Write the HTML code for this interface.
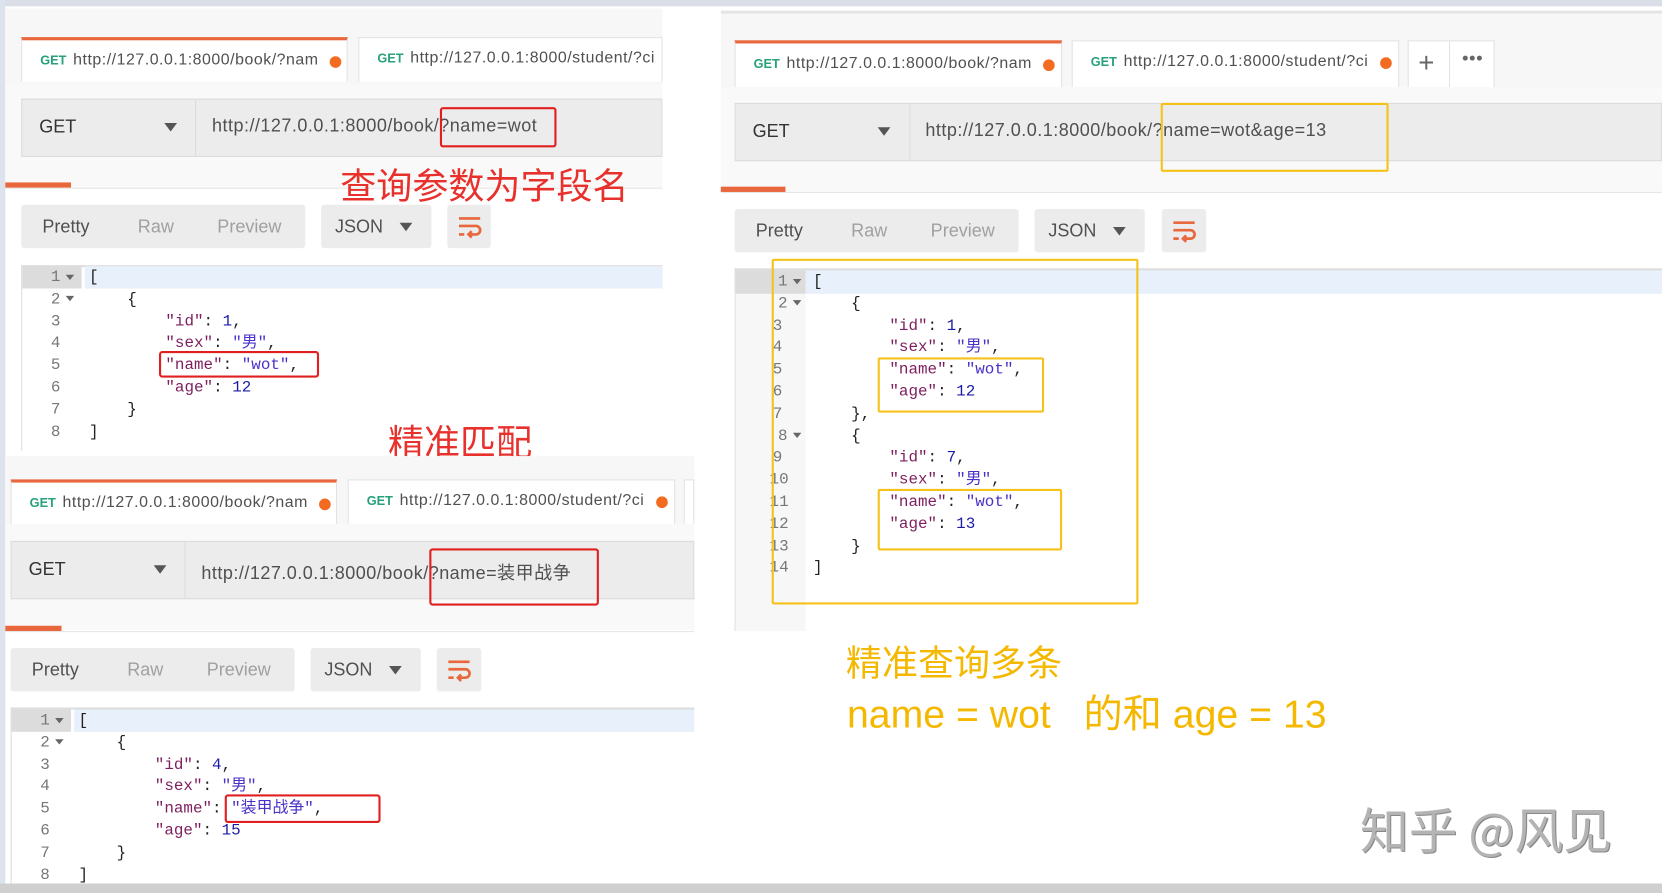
<!DOCTYPE html>
<html><head><meta charset="utf-8"><style>
*{margin:0;padding:0;box-sizing:border-box}
html,body{width:1662px;height:893px;overflow:hidden;background:#fff}
#s{position:absolute;left:0;top:0;width:1568px;height:842px;transform:scale(1.06,1.0606);transform-origin:0 0;font-family:"Liberation Sans","Noto Sans CJK SC",sans-serif;color:#505050}
.a{position:absolute}
.tabbar{background:#f7f7f7}
.tab{position:absolute;background:#fff;border:1px solid #e2e2e2;border-bottom:none;height:42px;font-size:15px;white-space:nowrap;overflow:hidden}
.tab.act{border-top:3px solid #e8673c}
.tab .g{position:absolute;left:17px;top:12px;color:#26a17b;font-weight:bold;font-size:12px}
.tab .u{position:absolute;left:48px;top:10px;color:#505050;letter-spacing:0.5px;width:236px;overflow:hidden}
.tab .d{position:absolute;top:15px;width:11px;height:11px;border-radius:50%;background:#f26b21}
.bar{position:absolute;background:#ececec;border:1px solid #dcdcdc;height:55px}
.bar .m{position:absolute;left:0;top:0;bottom:0;border-right:1px solid #dcdcdc;font-size:17px;color:#333;padding:16px 0 0 16px}
.bar .c{position:absolute;top:22px;width:0;height:0;border-left:6px solid transparent;border-right:6px solid transparent;border-top:8px solid #555}
.bar .u{position:absolute;top:15px;font-size:17px;color:#505050;white-space:nowrap;letter-spacing:0.45px}
.btn{position:absolute;background:#ececec;border-radius:3px;height:41px;font-size:17px}
.btn span{position:absolute;top:11px}
.code{position:absolute;font-family:"Liberation Mono","Noto Sans CJK SC",monospace;font-size:15px;color:#222}
.ln{position:absolute;white-space:pre;height:21px}
.k{color:#7d1f5e}.n{color:#1c1ca8}.v{color:#4a32c8}
.gut{position:absolute;color:#777;font-family:"Liberation Mono",monospace;font-size:15px}
.box{position:absolute;border:2px solid #e02020;border-radius:3px}
.ybox{position:absolute;border:2px solid #f5c21b;border-radius:2px}
.red{position:absolute;color:#e8312c;font-size:34px;white-space:nowrap;font-family:"Noto Sans CJK SC",sans-serif}
.yel{position:absolute;color:#f5b800;white-space:nowrap;font-family:"Liberation Sans","Noto Sans CJK SC",sans-serif}
.tri{display:inline-block;width:0;height:0;border-left:4px solid transparent;border-right:4px solid transparent;border-top:5px solid #666;margin-left:5px;vertical-align:middle}
.jt{position:absolute;left:74px;top:17px;width:0;height:0;border-left:6px solid transparent;border-right:6px solid transparent;border-top:8px solid #555}
</style></head><body><div id="s">
<div class="a" style="left:0;top:0;width:1568px;height:6px;background:#d9dee7"></div>
<div class="a" style="left:0;top:0;width:5px;height:842px;background:#dde3ec"></div>
<div class="a" style="left:0;top:833px;width:1568px;height:9px;background:#cfcfcf"></div>

<!-- Panel 1 -->
<div class="a tabbar" style="left:5px;top:8px;width:620px;height:72px"></div>
<div class="tab act" style="left:20px;top:35px;width:308px"><span class="g">GET</span><span class="u">http://127.0.0.1:8000/book/?nam</span><span class="d" style="left:290px"></span></div>
<div class="tab" style="left:338px;top:35px;width:287px"><span class="g">GET</span><span class="u" style="width:240px">http://127.0.0.1:8000/student/?ci</span></div>
<div class="a" style="left:5px;top:80px;width:620px;height:97px;background:#f9f9f9"></div>
<div class="bar" style="left:20px;top:93px;width:605px"><div class="m" style="width:164px">GET</div><div class="c" style="left:134px"></div><div class="u" style="left:179px">http://127.0.0.1:8000/book/?name=wot</div></div>
<div class="box" style="left:415px;top:101px;width:110px;height:38px"></div>
<div class="a" style="left:5px;top:172px;width:62px;height:5px;background:#e8673c"></div>
<div class="a" style="left:5px;top:177px;width:620px;height:1px;background:#e6e6e6"></div>
<div class="red" style="left:321px;top:148px">查询参数为字段名</div>
<div class="btn" style="left:20px;top:193px;width:268px"><span style="left:20px">Pretty</span><span style="left:110px;color:#a0a0a0">Raw</span><span style="left:185px;color:#a0a0a0">Preview</span></div>
<div class="btn" style="left:303px;top:193px;width:104px"><span style="left:13px">JSON</span><i class="jt"></i></div>
<div class="btn" style="left:422px;top:193px;width:41px"><svg class="a" style="left:9px;top:9px" width="24" height="24" viewBox="0 0 24 24" fill="none" stroke="#e8673c" stroke-width="2.5"><path d="M2 4h20M2 11h16a4 4 0 0 1 0 8h-6M14 16l-3 3 3 3M2 19h5"/></svg></div>
<div class="a" style="left:20px;top:250px;width:605px;height:175px;border-top:2px solid #ddd;border-left:1px solid #ddd"></div>
<div class="a" style="left:80px;top:251px;width:545px;height:21px;background:#e8f0fb"></div>
<div class="a" style="left:21px;top:251px;width:56px;height:21px;background:#dcdcdc"></div>
<div class="gut" style="left:48px;top:252px;line-height:20.8px">1<i class="tri"></i><br>2<i class="tri"></i><br>3<br>4<br>5<br>6<br>7<br>8</div>
<div class="code" style="left:84px;top:252px;line-height:20.8px">
<div class="ln" style="top:0">[</div>
<div class="ln" style="top:21px">    {</div>
<div class="ln" style="top:42px">        <span class="k">"id"</span>: <span class="n">1</span>,</div>
<div class="ln" style="top:62px">        <span class="k">"sex"</span>: <span class="v">"男"</span>,</div>
<div class="ln" style="top:83px">        <span class="k">"name"</span>: <span class="v">"wot"</span>,</div>
<div class="ln" style="top:104px">        <span class="k">"age"</span>: <span class="n">12</span></div>
<div class="ln" style="top:125px">    }</div>
<div class="ln" style="top:146px">]</div></div>
<div class="box" style="left:150px;top:331px;width:151px;height:25px"></div>
<div class="red" style="left:366px;top:390px">精准匹配</div>

<!-- Panel 2 -->
<div class="a tabbar" style="left:5px;top:430px;width:650px;height:64px"></div>
<div class="tab act" style="left:10px;top:452px;width:308px"><span class="g">GET</span><span class="u">http://127.0.0.1:8000/book/?nam</span><span class="d" style="left:290px"></span></div>
<div class="tab" style="left:328px;top:452px;width:309px"><span class="g">GET</span><span class="u">http://127.0.0.1:8000/student/?ci</span><span class="d" style="left:290px"></span></div>
<div class="tab" style="left:645px;top:452px;width:10px"></div>
<div class="a" style="left:5px;top:494px;width:650px;height:100px;background:#f9f9f9"></div>
<div class="bar" style="left:10px;top:510px;width:645px"><div class="m" style="width:164px">GET</div><div class="c" style="left:134px"></div><div class="u" style="left:179px">http://127.0.0.1:8000/book/?name=装甲战争</div></div>
<div class="box" style="left:405px;top:517px;width:160px;height:54px"></div>
<div class="a" style="left:5px;top:590px;width:53px;height:5px;background:#e8673c"></div>
<div class="a" style="left:5px;top:595px;width:650px;height:1px;background:#e6e6e6"></div>
<div class="btn" style="left:10px;top:611px;width:268px"><span style="left:20px">Pretty</span><span style="left:110px;color:#a0a0a0">Raw</span><span style="left:185px;color:#a0a0a0">Preview</span></div>
<div class="btn" style="left:293px;top:611px;width:104px"><span style="left:13px">JSON</span><i class="jt"></i></div>
<div class="btn" style="left:412px;top:611px;width:42px"><svg class="a" style="left:9px;top:9px" width="24" height="24" viewBox="0 0 24 24" fill="none" stroke="#e8673c" stroke-width="2.5"><path d="M2 4h20M2 11h16a4 4 0 0 1 0 8h-6M14 16l-3 3 3 3M2 19h5"/></svg></div>
<div class="a" style="left:10px;top:667px;width:645px;height:166px;border-top:2px solid #ddd;border-left:1px solid #ddd"></div>
<div class="a" style="left:70px;top:669px;width:585px;height:21px;background:#e8f0fb"></div>
<div class="a" style="left:11px;top:669px;width:56px;height:21px;background:#dcdcdc"></div>
<div class="gut" style="left:38px;top:670px;line-height:20.8px">1<i class="tri"></i><br>2<i class="tri"></i><br>3<br>4<br>5<br>6<br>7<br>8</div>
<div class="code" style="left:74px;top:670px;line-height:20.8px">
<div class="ln" style="top:0">[</div>
<div class="ln" style="top:21px">    {</div>
<div class="ln" style="top:42px">        <span class="k">"id"</span>: <span class="n">4</span>,</div>
<div class="ln" style="top:62px">        <span class="k">"sex"</span>: <span class="v">"男"</span>,</div>
<div class="ln" style="top:83px">        <span class="k">"name"</span>: <span class="v">"装甲战争"</span>,</div>
<div class="ln" style="top:104px">        <span class="k">"age"</span>: <span class="n">15</span></div>
<div class="ln" style="top:125px">    }</div>
<div class="ln" style="top:146px">]</div></div>
<div class="box" style="left:212px;top:749px;width:147px;height:27px"></div>

<!-- Right panel -->
<div class="a" style="left:680px;top:10px;width:888px;height:3px;background:#e4e4e4"></div>
<div class="a tabbar" style="left:680px;top:13px;width:888px;height:69px"></div>
<div class="tab act" style="left:693px;top:38px;width:309px;height:44px"><span class="g">GET</span><span class="u">http://127.0.0.1:8000/book/?nam</span><span class="d" style="left:290px"></span></div>
<div class="tab" style="left:1011px;top:38px;width:309px;height:44px"><span class="g">GET</span><span class="u">http://127.0.0.1:8000/student/?ci</span><span class="d" style="left:290px"></span></div>
<div class="tab" style="left:1328px;top:38px;width:82px;height:44px;font-size:26px"><span class="a" style="left:9px;top:5px;color:#666">+</span><span class="a" style="left:38px;top:0;width:1px;height:44px;background:#e2e2e2"></span><span class="a" style="left:50px;top:10px;color:#666;font-size:11px;letter-spacing:0px">●●●</span></div>
<div class="a" style="left:680px;top:82px;width:888px;height:100px;background:#f9f9f9"></div>
<div class="bar" style="left:693px;top:97px;width:875px"><div class="m" style="width:165px">GET</div><div class="c" style="left:134px"></div><div class="u" style="left:179px">http://127.0.0.1:8000/book/?name=wot&amp;age=13</div></div>
<div class="ybox" style="left:1095px;top:97px;width:215px;height:65px"></div>
<div class="a" style="left:680px;top:176px;width:61px;height:5px;background:#e8673c"></div>
<div class="a" style="left:680px;top:181px;width:888px;height:1px;background:#e6e6e6"></div>
<div class="btn" style="left:693px;top:197px;width:268px"><span style="left:20px">Pretty</span><span style="left:110px;color:#a0a0a0">Raw</span><span style="left:185px;color:#a0a0a0">Preview</span></div>
<div class="btn" style="left:976px;top:197px;width:104px"><span style="left:13px">JSON</span><i class="jt"></i></div>
<div class="btn" style="left:1096px;top:197px;width:42px"><svg class="a" style="left:9px;top:9px" width="24" height="24" viewBox="0 0 24 24" fill="none" stroke="#e8673c" stroke-width="2.5"><path d="M2 4h20M2 11h16a4 4 0 0 1 0 8h-6M14 16l-3 3 3 3M2 19h5"/></svg></div>
<div class="a" style="left:693px;top:253px;width:875px;height:342px;border-top:2px solid #ddd;border-left:1px solid #ddd"></div>
<div class="a" style="left:694px;top:255px;width:66px;height:340px;background:#f7f7f7"></div>
<div class="a" style="left:694px;top:255px;width:66px;height:22px;background:#dcdcdc"></div>
<div class="a" style="left:760px;top:255px;width:808px;height:22px;background:#e8f0fb"></div>
<div class="gut" style="left:726px;top:256px;line-height:20.8px;text-align:right;width:30px">1<i class="tri"></i><br>2<i class="tri"></i><br>3&nbsp;&nbsp;<br>4&nbsp;&nbsp;<br>5&nbsp;&nbsp;<br>6&nbsp;&nbsp;<br>7&nbsp;&nbsp;<br>8<i class="tri"></i><br>9&nbsp;&nbsp;<br>10&nbsp;&nbsp;<br>11&nbsp;&nbsp;<br>12&nbsp;&nbsp;<br>13&nbsp;&nbsp;<br>14&nbsp;&nbsp;</div>
<div class="code" style="left:767px;top:256px;line-height:20.8px">
<div class="ln" style="top:0">[</div>
<div class="ln" style="top:21px">    {</div>
<div class="ln" style="top:42px">        <span class="k">"id"</span>: <span class="n">1</span>,</div>
<div class="ln" style="top:62px">        <span class="k">"sex"</span>: <span class="v">"男"</span>,</div>
<div class="ln" style="top:83px">        <span class="k">"name"</span>: <span class="v">"wot"</span>,</div>
<div class="ln" style="top:104px">        <span class="k">"age"</span>: <span class="n">12</span></div>
<div class="ln" style="top:125px">    },</div>
<div class="ln" style="top:146px">    {</div>
<div class="ln" style="top:166px">        <span class="k">"id"</span>: <span class="n">7</span>,</div>
<div class="ln" style="top:187px">        <span class="k">"sex"</span>: <span class="v">"男"</span>,</div>
<div class="ln" style="top:208px">        <span class="k">"name"</span>: <span class="v">"wot"</span>,</div>
<div class="ln" style="top:229px">        <span class="k">"age"</span>: <span class="n">13</span></div>
<div class="ln" style="top:250px">    }</div>
<div class="ln" style="top:270px">]</div></div>
<div class="ybox" style="left:728px;top:244px;width:346px;height:326px"></div>
<div class="ybox" style="left:828px;top:337px;width:157px;height:52px"></div>
<div class="ybox" style="left:828px;top:461px;width:174px;height:58px"></div>
<div class="yel" style="left:798px;top:598px;font-size:34px;font-family:'Noto Sans CJK SC',sans-serif">精准查询多条</div>
<div class="yel" style="left:799px;top:643px;font-size:37px;white-space:pre">name = wot   的和 age = 13</div>
<div class="a" style="left:1283px;top:748px;font-size:46px;color:#b4b4b4;font-family:'Noto Sans CJK SC',sans-serif;text-shadow:1px 1px 0 #888;white-space:nowrap">知乎 @风见</div>
</div></body></html>
